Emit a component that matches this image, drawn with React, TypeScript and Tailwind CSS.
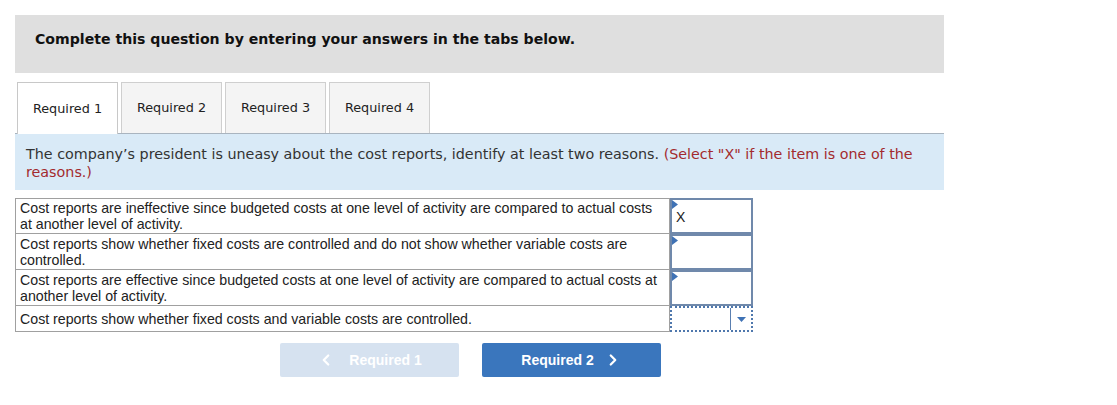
import React from 'react';
import { ChevronLeft, ChevronRight } from 'lucide-react';

const tabs = ['Required 1', 'Required 2', 'Required 3', 'Required 4'];

const rows = [
  {
    text: 'Cost reports are ineffective since budgeted costs at one level of activity are compared to actual costs at another level of activity.',
    value: 'X',
  },
  {
    text: 'Cost reports show whether fixed costs are controlled and do not show whether variable costs are controlled.',
    value: '',
  },
  {
    text: 'Cost reports are effective since budgeted costs at one level of activity are compared to actual costs at another level of activity.',
    value: '',
  },
];

const Marker = () => (
  <svg className="absolute left-0 top-0" width="6" height="9" viewBox="0 0 6 9">
    <path d="M0 0 L6 4.5 L0 9 Z" fill="#3f72b5" />
  </svg>
);

const App: React.FC = () => {
  return (
    <div className="min-h-screen bg-white pt-[15px] pl-[15px]">
      <div className="w-[929px]">
        {/* Header */}
        <div className="flex h-[58px] items-center bg-[#dfdfdf] pb-[8px] pl-[20px]">
          <p className="font-['DejaVu_Sans',sans-serif] text-[14.1px] font-bold text-[#111]">
            Complete this question by entering your answers in the tabs below.
          </p>
        </div>

        {/* Tabs */}
        <div className="mt-[9px] flex items-end pl-[2px]">
          {tabs.map((t, i) => (
            <div
              key={t}
              className={
                i === 0
                  ? "relative z-10 mb-[-1px] flex h-[52px] w-[101px] items-center justify-center border border-b-0 border-[#c8c8c8] bg-white font-['DejaVu_Sans',sans-serif] text-[12.8px] text-[#222]"
                  : "ml-[3px] flex h-[51px] w-[101px] items-center justify-center border border-b-0 border-[#cfcfcf] bg-[#f4f4f4] font-['DejaVu_Sans',sans-serif] text-[12.8px] text-[#222]"
              }
            >
              {t}
            </div>
          ))}
        </div>

        {/* Prompt */}
        <div className="border-t border-[#a9b4bf] bg-[#d9eaf7] px-[11px] pt-[11px] pb-[9px] font-['DejaVu_Sans',sans-serif] text-[14.3px] leading-[18px] text-[#333]">
          The company’s president is uneasy about the cost reports, identify at least two reasons.{' '}
          <span className="text-[#a32a2e]">(Select "X" if the item is one of the reasons.)</span>
        </div>

        {/* Table */}
        <div className="mt-[8px] w-[738px] font-['Liberation_Sans',Arial,sans-serif] text-[14.2px] leading-[16px] text-[#222]">
          {rows.map((r, i) => (
            <div key={i} className="flex h-[36px]">
              <div
                className={
                  i === 0
                    ? 'flex w-[655px] items-center border border-[#a0a0a0] px-[4px]'
                    : 'flex w-[655px] items-center border border-t-0 border-[#a0a0a0] px-[4px]'
                }
              >
                {r.text}
              </div>
              <div className="relative h-[36px] w-[83px] border-2 border-[#7089ab] bg-white">
                <Marker />
                {r.value && (
                  <span className="absolute left-[4px] top-[9px] text-[14px] text-[#222]">{r.value}</span>
                )}
              </div>
            </div>
          ))}
          <div className="flex h-[26px]">
            <div className="flex w-[655px] items-center border border-t-0 border-[#a0a0a0] px-[4px]">
              Cost reports show whether fixed costs and variable costs are controlled.
            </div>
            <div className="flex h-[26px] w-[83px] border-2 border-dotted border-[#4f78ad] bg-white">
              <div className="flex-1" />
              <div className="flex w-[21px] items-center justify-center border-l border-[#5a7fb0]">
                <svg width="9" height="5" viewBox="0 0 9 5">
                  <path d="M0 0 L9 0 L4.5 5 Z" fill="#3f72b5" />
                </svg>
              </div>
            </div>
          </div>
        </div>

        {/* Nav buttons */}
        <div className="mt-[11px] flex gap-[23px] pl-[265px] font-['Liberation_Sans',Arial,sans-serif] text-[14px] font-bold">
          <button className="flex h-[34px] w-[179px] items-center justify-center gap-[14px] rounded-[2px] bg-[#d6e2f0] text-white">
            <ChevronLeft size={18} strokeWidth={3} />
            <span>Required 1</span>
          </button>
          <button className="flex h-[34px] w-[179px] items-center justify-center gap-[10px] rounded-[2px] bg-[#3a76bd] text-white">
            <span>Required 2</span>
            <ChevronRight size={18} strokeWidth={3} />
          </button>
        </div>
      </div>
    </div>
  );
};

export default App;
